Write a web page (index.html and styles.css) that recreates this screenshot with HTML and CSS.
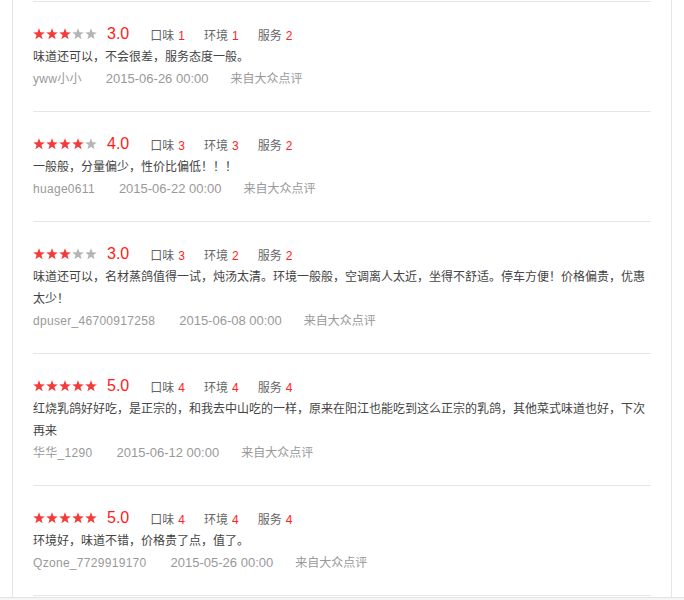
FILE: index.html
```html
<!DOCTYPE html>
<html lang="zh-CN">
<head>
<meta charset="utf-8">
<title>评论列表</title>
<link rel="stylesheet" href="styles.css">
</head>
<body>
<div class="page">
  <div class="box">
    <ul class="list">
      <li class="review">
        <div class="rating">
          <svg class="stars" width="64" height="12" viewBox="0 0 64 12">
            <polygon class="on" points="6,0.3 7.5,4.3 11.8,4.4 8.4,7 9.6,11.3 6,8.8 2.4,11.3 3.6,7 0.2,4.4 4.5,4.3"/>
            <polygon class="on" transform="translate(13 0)" points="6,0.3 7.5,4.3 11.8,4.4 8.4,7 9.6,11.3 6,8.8 2.4,11.3 3.6,7 0.2,4.4 4.5,4.3"/>
            <polygon class="on" transform="translate(26 0)" points="6,0.3 7.5,4.3 11.8,4.4 8.4,7 9.6,11.3 6,8.8 2.4,11.3 3.6,7 0.2,4.4 4.5,4.3"/>
            <polygon class="off" transform="translate(39 0)" points="6,0.3 7.5,4.3 11.8,4.4 8.4,7 9.6,11.3 6,8.8 2.4,11.3 3.6,7 0.2,4.4 4.5,4.3"/>
            <polygon class="off" transform="translate(52 0)" points="6,0.3 7.5,4.3 11.8,4.4 8.4,7 9.6,11.3 6,8.8 2.4,11.3 3.6,7 0.2,4.4 4.5,4.3"/>
          </svg>
          <span class="score">3.0</span>
          <span class="item">口味<em>1</em></span>
          <span class="item">环境<em>1</em></span>
          <span class="item">服务<em>2</em></span>
        </div>
        <p class="comment">味道还可以，不会很差，服务态度一般。</p>
        <div class="meta"><span class="user">yww小小</span><span class="date">2015-06-26 00:00</span><span class="src">来自大众点评</span></div>
      </li>
      <li class="review">
        <div class="rating">
          <svg class="stars" width="64" height="12" viewBox="0 0 64 12">
            <polygon class="on" points="6,0.3 7.5,4.3 11.8,4.4 8.4,7 9.6,11.3 6,8.8 2.4,11.3 3.6,7 0.2,4.4 4.5,4.3"/>
            <polygon class="on" transform="translate(13 0)" points="6,0.3 7.5,4.3 11.8,4.4 8.4,7 9.6,11.3 6,8.8 2.4,11.3 3.6,7 0.2,4.4 4.5,4.3"/>
            <polygon class="on" transform="translate(26 0)" points="6,0.3 7.5,4.3 11.8,4.4 8.4,7 9.6,11.3 6,8.8 2.4,11.3 3.6,7 0.2,4.4 4.5,4.3"/>
            <polygon class="on" transform="translate(39 0)" points="6,0.3 7.5,4.3 11.8,4.4 8.4,7 9.6,11.3 6,8.8 2.4,11.3 3.6,7 0.2,4.4 4.5,4.3"/>
            <polygon class="off" transform="translate(52 0)" points="6,0.3 7.5,4.3 11.8,4.4 8.4,7 9.6,11.3 6,8.8 2.4,11.3 3.6,7 0.2,4.4 4.5,4.3"/>
          </svg>
          <span class="score">4.0</span>
          <span class="item">口味<em>3</em></span>
          <span class="item">环境<em>3</em></span>
          <span class="item">服务<em>2</em></span>
        </div>
        <p class="comment">一般般，分量偏少，性价比偏低！！！</p>
        <div class="meta"><span class="user">huage0611</span><span class="date">2015-06-22 00:00</span><span class="src">来自大众点评</span></div>
      </li>
      <li class="review">
        <div class="rating">
          <svg class="stars" width="64" height="12" viewBox="0 0 64 12">
            <polygon class="on" points="6,0.3 7.5,4.3 11.8,4.4 8.4,7 9.6,11.3 6,8.8 2.4,11.3 3.6,7 0.2,4.4 4.5,4.3"/>
            <polygon class="on" transform="translate(13 0)" points="6,0.3 7.5,4.3 11.8,4.4 8.4,7 9.6,11.3 6,8.8 2.4,11.3 3.6,7 0.2,4.4 4.5,4.3"/>
            <polygon class="on" transform="translate(26 0)" points="6,0.3 7.5,4.3 11.8,4.4 8.4,7 9.6,11.3 6,8.8 2.4,11.3 3.6,7 0.2,4.4 4.5,4.3"/>
            <polygon class="off" transform="translate(39 0)" points="6,0.3 7.5,4.3 11.8,4.4 8.4,7 9.6,11.3 6,8.8 2.4,11.3 3.6,7 0.2,4.4 4.5,4.3"/>
            <polygon class="off" transform="translate(52 0)" points="6,0.3 7.5,4.3 11.8,4.4 8.4,7 9.6,11.3 6,8.8 2.4,11.3 3.6,7 0.2,4.4 4.5,4.3"/>
          </svg>
          <span class="score">3.0</span>
          <span class="item">口味<em>3</em></span>
          <span class="item">环境<em>2</em></span>
          <span class="item">服务<em>2</em></span>
        </div>
        <p class="comment">味道还可以，名材蒸鸽值得一试，炖汤太清。环境一般般，空调离人太近，坐得不舒适。停车方便！价格偏贵，优惠太少！</p>
        <div class="meta"><span class="user">dpuser_46700917258</span><span class="date">2015-06-08 00:00</span><span class="src">来自大众点评</span></div>
      </li>
      <li class="review">
        <div class="rating">
          <svg class="stars" width="64" height="12" viewBox="0 0 64 12">
            <polygon class="on" points="6,0.3 7.5,4.3 11.8,4.4 8.4,7 9.6,11.3 6,8.8 2.4,11.3 3.6,7 0.2,4.4 4.5,4.3"/>
            <polygon class="on" transform="translate(13 0)" points="6,0.3 7.5,4.3 11.8,4.4 8.4,7 9.6,11.3 6,8.8 2.4,11.3 3.6,7 0.2,4.4 4.5,4.3"/>
            <polygon class="on" transform="translate(26 0)" points="6,0.3 7.5,4.3 11.8,4.4 8.4,7 9.6,11.3 6,8.8 2.4,11.3 3.6,7 0.2,4.4 4.5,4.3"/>
            <polygon class="on" transform="translate(39 0)" points="6,0.3 7.5,4.3 11.8,4.4 8.4,7 9.6,11.3 6,8.8 2.4,11.3 3.6,7 0.2,4.4 4.5,4.3"/>
            <polygon class="on" transform="translate(52 0)" points="6,0.3 7.5,4.3 11.8,4.4 8.4,7 9.6,11.3 6,8.8 2.4,11.3 3.6,7 0.2,4.4 4.5,4.3"/>
          </svg>
          <span class="score">5.0</span>
          <span class="item">口味<em>4</em></span>
          <span class="item">环境<em>4</em></span>
          <span class="item">服务<em>4</em></span>
        </div>
        <p class="comment">红烧乳鸽好好吃，是正宗的，和我去中山吃的一样，原来在阳江也能吃到这么正宗的乳鸽，其他菜式味道也好，下次再来</p>
        <div class="meta"><span class="user">华华_1290</span><span class="date">2015-06-12 00:00</span><span class="src">来自大众点评</span></div>
      </li>
      <li class="review">
        <div class="rating">
          <svg class="stars" width="64" height="12" viewBox="0 0 64 12">
            <polygon class="on" points="6,0.3 7.5,4.3 11.8,4.4 8.4,7 9.6,11.3 6,8.8 2.4,11.3 3.6,7 0.2,4.4 4.5,4.3"/>
            <polygon class="on" transform="translate(13 0)" points="6,0.3 7.5,4.3 11.8,4.4 8.4,7 9.6,11.3 6,8.8 2.4,11.3 3.6,7 0.2,4.4 4.5,4.3"/>
            <polygon class="on" transform="translate(26 0)" points="6,0.3 7.5,4.3 11.8,4.4 8.4,7 9.6,11.3 6,8.8 2.4,11.3 3.6,7 0.2,4.4 4.5,4.3"/>
            <polygon class="on" transform="translate(39 0)" points="6,0.3 7.5,4.3 11.8,4.4 8.4,7 9.6,11.3 6,8.8 2.4,11.3 3.6,7 0.2,4.4 4.5,4.3"/>
            <polygon class="on" transform="translate(52 0)" points="6,0.3 7.5,4.3 11.8,4.4 8.4,7 9.6,11.3 6,8.8 2.4,11.3 3.6,7 0.2,4.4 4.5,4.3"/>
          </svg>
          <span class="score">5.0</span>
          <span class="item">口味<em>4</em></span>
          <span class="item">环境<em>4</em></span>
          <span class="item">服务<em>4</em></span>
        </div>
        <p class="comment">环境好，味道不错，价格贵了点，值了。</p>
        <div class="meta"><span class="user">Qzone_7729919170</span><span class="date">2015-05-26 00:00</span><span class="src">来自大众点评</span></div>
      </li>
    </ul>
  </div>
  <div class="footer"></div>
</div>
</body>
</html>
```

FILE: styles.css
```css
html, body {
  margin: 0;
  padding: 0;
  background: #fff;
}

body {
  font-family: "Liberation Sans", "Noto Sans CJK SC", sans-serif;
  font-size: 12px;
  color: #444;
}

.page {
  width: 684px;
}

.box {
  margin-left: 12px;
  width: 618px;
  padding: 1px 20px 1px;
  border-left: 1px solid #e6e6e6;
  border-right: 1px solid #e6e6e6;
}

.list {
  list-style: none;
  margin: 0;
  padding: 0;
  border-bottom: 1px solid #e6e6e6;
}

.review {
  border-top: 1px solid #e6e6e6;
  padding: 20px 0 21px;
}

.rating {
  display: flex;
  align-items: center;
  height: 24px;
  color: #666;
}

.stars {
  display: block;
  margin-right: 10px;
}

.stars .on {
  fill: #f53a3a;
}

.stars .off {
  fill: #b4b4b4;
}

.score {
  font-size: 16px;
  color: #ff1a1a;
  margin-right: 21px;
}

.item {
  margin-right: 19px;
  font-size: 12px;
}

.item em {
  font-style: normal;
  color: #ff2222;
  margin-left: 4px;
}

.comment {
  margin: 0;
  line-height: 22px;
  color: #444;
}

.meta {
  line-height: 22px;
  color: #999;
  display: flex;
  align-items: baseline;
}

.user {
  margin-right: 24px;
  letter-spacing: 0.3px;
  color: #999;
}

.date {
  margin-right: 22px;
  font-size: 13px;
}

.footer {
  border-top: 1px solid #e3e3e3;
  background: #f6f6f6;
  height: 8px;
}
```
